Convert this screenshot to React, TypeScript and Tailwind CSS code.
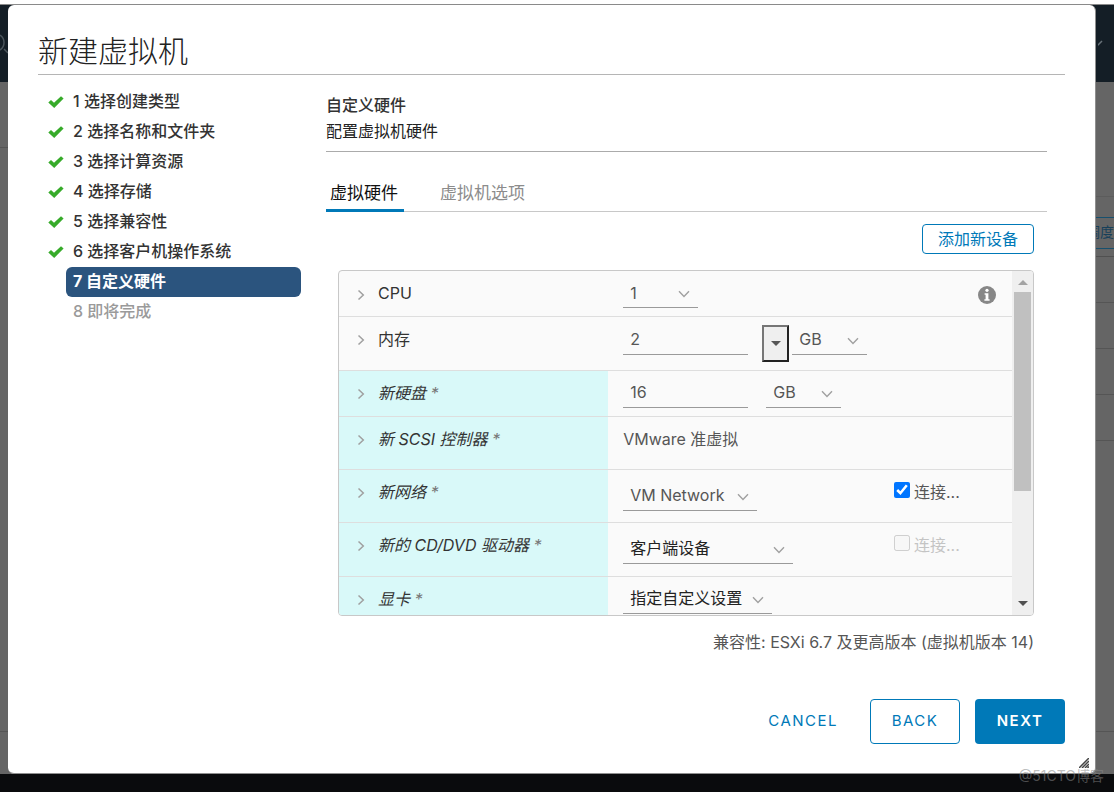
import React, { useState } from "react";
import { clsx } from "clsx";

const STEPS = [
  "选择创建类型",
  "选择名称和文件夹",
  "选择计算资源",
  "选择存储",
  "选择兼容性",
  "选择客户机操作系统",
  "自定义硬件",
  "即将完成",
];

const CURRENT_STEP = 7;

const CheckMark = () => (
  <svg viewBox="0 0 16 12" className="w-4 h-3" aria-hidden="true">
    <path d="M0.3 6.6 3 4 6 6.8 13 0.3 15.6 2.6 6.2 11.9Z" fill="#37ab2a" />
  </svg>
);

const ChevronDown = ({ className }: { className?: string }) => (
  <svg viewBox="0 0 12 8" className={clsx("w-3 h-2", className)} fill="none" aria-hidden="true">
    <path d="M1 1.2 6 6.4 11 1.2" stroke="#a0a0a0" strokeWidth="1.4" />
  </svg>
);

const InfoIcon = () => (
  <svg viewBox="0 0 18 18" className="size-[18px]" aria-hidden="true">
    <circle cx="9" cy="9" r="9" fill="#878787" />
    <circle cx="9" cy="4.3" r="1.6" fill="#fff" />
    <path d="M6.6 7.2h3.8v6h1.2v1.6H6.4v-1.6h1.2V8.8h-1Z" fill="#fff" />
  </svg>
);

interface SelectProps {
  label: string;
  options: string[];
  className?: string;
}

const Select: React.FC<SelectProps> = ({ label, options, className }) => (
  <div className={clsx("relative", className)}>
    <select
      aria-label={label}
      className="block w-full h-[30px] pl-[7px] pr-5 appearance-none bg-transparent border-b border-[#9a9a9a] outline-none"
    >
      {options.map((option) => (
        <option key={option}>{option}</option>
      ))}
    </select>
    <ChevronDown className="absolute right-2 top-3 pointer-events-none" />
  </div>
);

const SizeInput = ({ label, value }: { label: string; value: string }) => (
  <input
    type="text"
    aria-label={label}
    defaultValue={value}
    className="w-[125px] h-[30px] pl-[7px] bg-transparent border-b border-[#9a9a9a] outline-none"
  />
);

interface ConnectProps {
  id: string;
  checked?: boolean;
  disabled?: boolean;
}

const Connect: React.FC<ConnectProps> = ({ id, checked, disabled }) => (
  <div className="flex items-start pt-3">
    <input id={id} type="checkbox" defaultChecked={checked} disabled={disabled} className="size-4" />
    <label htmlFor={id} className={clsx("pl-1 leading-5", disabled ? "text-[#c4c4c4]" : "text-[#565656]")}>
      连接...
    </label>
  </div>
);

interface RowProps {
  name: string;
  height: string;
  isNew?: boolean;
  extra?: React.ReactNode;
  children: React.ReactNode;
}

const HardwareRow: React.FC<RowProps> = ({ name, height, isNew, extra, children }) => (
  <tr className={clsx("border-b border-[#dedede] last:border-0 align-top", height)}>
    <th scope="row" className={clsx("p-0 text-left font-normal text-[#333]", isNew && "bg-[#d9f9f9] italic")}>
      <button type="button" className="flex items-center pt-[10px] pl-[18px] text-left">
        <svg viewBox="0 0 8 12" className="w-2 h-3 mr-[13px] mt-[3px]" fill="none" aria-hidden="true">
          <path d="M1.5 1.5 6.3 6 1.5 10.5" stroke="#a0a0a0" strokeWidth="1.5" />
        </svg>
        <span className="leading-6">
          {name}
          {isNew && <span className="text-[#777]"> *</span>}
        </span>
      </button>
    </th>
    <td className="p-0 pl-[15px]">{children}</td>
    <td className="p-0">{extra}</td>
  </tr>
);

const Backdrop = () => (
  <div className="absolute inset-0 flex flex-col overflow-hidden bg-[#656565]" aria-hidden="true">
    <div className="h-[5px] shrink-0 bg-white border-b border-[#8a8a8a]" />
    <div className="h-[77px] shrink-0 flex items-center justify-between bg-[#141e26]">
      <svg viewBox="0 0 8 24" className="w-2 h-6" fill="none">
        <path d="M0 3a9 9 0 0 1 0 15M4 17l4 4" stroke="#4b555c" strokeWidth="1.5" />
      </svg>
      <svg viewBox="0 0 16 8" className="w-4 h-2" fill="none">
        <path d="M-6 1 -1 6 4 1" stroke="#69737a" strokeWidth="1.5" />
      </svg>
    </div>
    <div className="flex-1 flex justify-between">
      <div className="w-2 flex flex-col">
        <div className="h-[66px] border-b border-[#555]" />
        <div className="flex-1 border-b border-[#555]" />
        <div className="h-[42px]" />
      </div>
      <div className="w-7 flex flex-col">
        <div className="h-[115px] border-b border-[#5c5c5c]" />
        <div className="h-5" />
        <div className="h-8 border-y border-[#17506e] pt-1 text-sm leading-5 text-[#17405a] whitespace-nowrap">
          调度
        </div>
        <div className="h-2 border-b border-[#505050]" />
        <div className="h-[46px] border-b border-[#555]" />
        <div className="h-[46px] border-b border-[#555]" />
        <div className="h-[46px] border-b border-[#555]" />
        <div className="h-[46px] border-b border-[#555]" />
        <div className="flex-1 border-b border-[#555]" />
        <div className="h-[42px]" />
      </div>
    </div>
    <div className="h-[18px] shrink-0 bg-[#0a0b0d]" />
  </div>
);

const StepList = () => (
  <nav className="w-[263px] shrink-0 pl-[10px]">
    <ol>
      {STEPS.map((step, i) => {
        const n = i + 1;
        return (
          <li key={step} className="flex items-center h-[30px]">
            <span className="w-[18px] shrink-0">{n < CURRENT_STEP && <CheckMark />}</span>
            <a
              href="#"
              className={clsx(
                "flex-1 pl-[7px] h-[30px] leading-7 rounded-md",
                n < CURRENT_STEP && "font-medium text-[#333]",
                n === CURRENT_STEP && "font-bold text-white bg-[#2b547e]",
                n > CURRENT_STEP && "font-medium text-[#9a9a9a]"
              )}
            >
              {n} {step}
            </a>
          </li>
        );
      })}
    </ol>
  </nav>
);

const HardwareTable = () => (
  <div className="flex border border-[#c8c8c8] rounded bg-[#fafafa] overflow-hidden">
    <table className="flex-1 table-fixed border-collapse text-base text-[#565656]">
      <colgroup>
        <col className="w-2/5" />
        <col />
        <col className="w-[118px]" />
      </colgroup>
      <tbody>
        <HardwareRow
          name="CPU"
          height="h-[45px]"
          extra={
            <div className="flex justify-end pt-[15px] pr-4">
              <InfoIcon />
            </div>
          }
        >
          <div className="pt-[7px]">
            <Select label="CPU" options={["1", "2", "4", "8"]} className="w-[75px]" />
          </div>
        </HardwareRow>
        <HardwareRow name="内存" height="h-[54px]">
          <div className="flex items-start pt-2">
            <SizeInput label="内存" value="2" />
            <button
              type="button"
              aria-label="内存建议值"
              className="ml-[14px] mr-[3px] w-[27px] h-[37px] flex items-center justify-center bg-[#efefef] border-2 border-t-[#767676] border-l-[#767676] border-r-[#222] border-b-[#222]"
            >
              <svg viewBox="0 0 10 5" className="w-[10px] h-[5px]" aria-hidden="true">
                <path d="M0 0h10L5 5Z" fill="#565656" />
              </svg>
            </button>
            <Select label="内存单位" options={["GB", "MB"]} className="w-[75px]" />
          </div>
        </HardwareRow>
        <HardwareRow name="新硬盘" height="h-[46px]" isNew>
          <div className="flex items-start pt-[7px] gap-[18px]">
            <SizeInput label="新硬盘" value="16" />
            <Select label="硬盘单位" options={["GB", "MB", "TB"]} className="w-[75px]" />
          </div>
        </HardwareRow>
        <HardwareRow name="新 SCSI 控制器" height="h-[53px]" isNew>
          <p className="pt-[10px] leading-6">VMware 准虚拟</p>
        </HardwareRow>
        <HardwareRow name="新网络" height="h-[53px]" isNew extra={<Connect id="connect-network" checked />}>
          <div className="pt-[11px]">
            <Select label="新网络" options={["VM Network"]} className="w-[134px]" />
          </div>
        </HardwareRow>
        <HardwareRow name="新的 CD/DVD 驱动器" height="h-[54px]" isNew extra={<Connect id="connect-cd" disabled />}>
          <div className="pt-[11px]">
            <Select label="CD/DVD" options={["客户端设备"]} className="w-[170px] text-[#222]" />
          </div>
        </HardwareRow>
        <HardwareRow name="显卡" height="h-[39px]" isNew>
          <div className="pt-[7px]">
            <Select label="显卡" options={["指定自定义设置"]} className="w-[149px] text-[#222]" />
          </div>
        </HardwareRow>
      </tbody>
    </table>

    {/* Scrollbar */}
    <div className="w-[21px] shrink-0 flex flex-col items-center bg-[#efefef]" aria-hidden="true">
      <svg viewBox="0 0 10 5" className="w-[10px] h-[5px] mt-[9px] mb-[7px]">
        <path d="M0 5h10L5 0Z" fill="#a3a3a3" />
      </svg>
      <div className="w-[17px] h-[199px] bg-[#c0c0c0]" />
      <svg viewBox="0 0 10 5" className="w-[10px] h-[5px] mt-auto mb-[9px]">
        <path d="M0 0h10L5 5Z" fill="#505050" />
      </svg>
    </div>
  </div>
);

const TABS = ["虚拟硬件", "虚拟机选项"];

export default function App() {
  const [tab, setTab] = useState(TABS[0]);

  return (
    <div className="relative min-h-screen flex pt-[5px] pb-[18px] pl-2 pr-[18px] text-base font-['Inter','Noto_Sans_CJK_SC',sans-serif]">
      <Backdrop />

      <main className="relative flex-1 flex flex-col bg-white rounded-md pl-[30px] pr-[30px] pb-[29px] border-b border-r border-[#8f8f8f]">
        <h1 className="pt-6 h-[70px] text-[30px] leading-[44px] font-light text-[#222] border-b border-[#b5b5b5]">
          新建虚拟机
        </h1>

        <div className="flex-1 flex pt-3">
          <StepList />

          <section className="flex-1 ml-[25px] mr-[18px]">
            <div className="pt-[5px] pb-[7px] border-b border-[#ababab]">
              <h2 className="font-medium leading-[26px] text-[#333]">自定义硬件</h2>
              <p className="leading-[26px] text-[#222]">配置虚拟机硬件</p>
            </div>

            <div role="tablist" className="flex gap-8 mt-5 border-b border-[#c8c8c8]">
              {TABS.map((name) => (
                <button
                  key={name}
                  type="button"
                  role="tab"
                  aria-selected={tab === name}
                  onClick={() => setTab(name)}
                  className={clsx(
                    "h-10 pt-1 pl-1 pr-[6px] text-[17px] leading-6 border-b-[3px] -mb-px",
                    tab === name ? "border-[#0079b8] text-[#111]" : "border-transparent text-[#8c8c8c]"
                  )}
                >
                  {name}
                </button>
              ))}
            </div>

            <div className="pl-3 pr-[13px]">
              <div className="flex justify-end pt-3 pb-4">
                <button
                  type="button"
                  className="h-[30px] px-[15px] leading-7 text-[#0079b8] border border-[#0079b8] rounded"
                >
                  添加新设备
                </button>
              </div>
              <HardwareTable />
              <p className="pt-[14px] text-right leading-6 text-[#565656]">
                兼容性: ESXi 6.7 及更高版本 (虚拟机版本 14)
              </p>
            </div>
          </section>
        </div>

        <footer className="flex justify-end items-center gap-[15px] text-[15px] tracking-widest">
          <button type="button" className="h-[45px] px-[17px] text-[#0079b8]">
            CANCEL
          </button>
          <button type="button" className="w-[90px] h-[45px] text-[#0079b8] border border-[#0079b8] rounded">
            BACK
          </button>
          <button type="button" className="w-[90px] h-[45px] font-semibold text-white bg-[#0079b8] rounded">
            NEXT
          </button>
        </footer>

        {/* Resize handle */}
        <svg viewBox="0 0 10 10" className="absolute right-[6px] bottom-[5px] size-[10px]" aria-hidden="true">
          <path d="M0 10 10 0M3 10 10 3M6 10 10 6M8.5 10 10 8.5" stroke="#444" strokeWidth="1.5" />
        </svg>
      </main>

      <span className="absolute right-[10px] bottom-[6px] text-sm leading-5 text-[#8888888c]">@51CTO博客</span>
    </div>
  );
}
